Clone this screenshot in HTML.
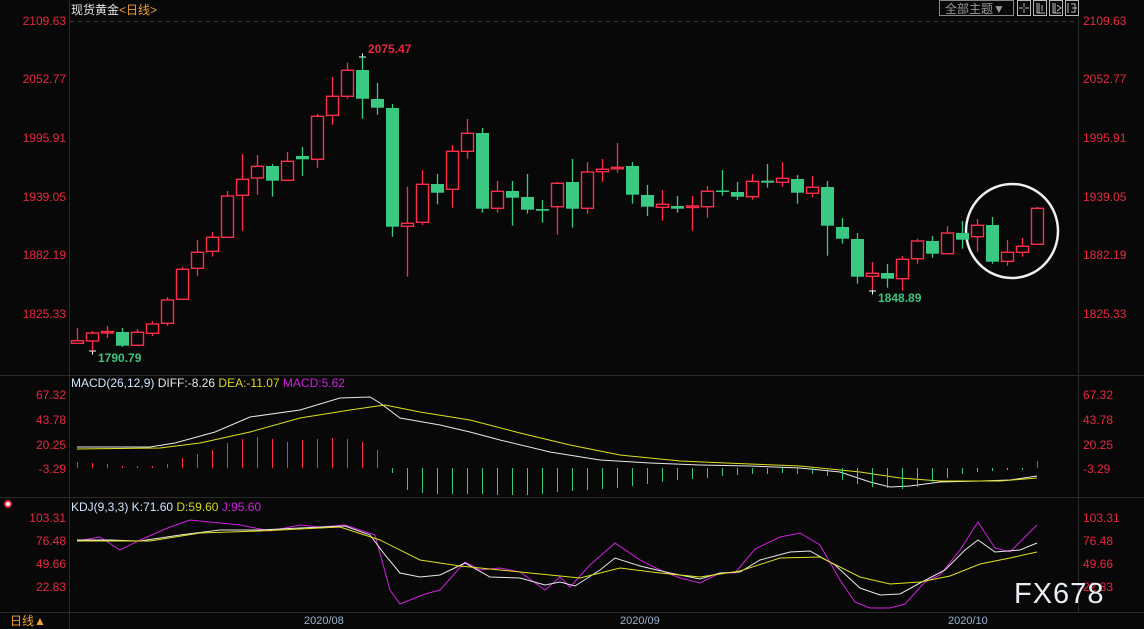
<!DOCTYPE html>
<html><head><meta charset="utf-8"><style>
html,body{margin:0;padding:0;background:#080808;}
svg{display:block}
text{font-family:"Liberation Sans","Noto Sans CJK SC",sans-serif;}
</style></head><body>
<svg width="1144" height="629" xmlns="http://www.w3.org/2000/svg">
<rect width="1144" height="629" fill="#080808"/>
<!-- frame lines -->
<g stroke="#2a2a2a" stroke-width="1">
<line x1="69.5" y1="0" x2="69.5" y2="629"/>
<line x1="1078.5" y1="0" x2="1078.5" y2="612"/>
<line x1="0" y1="375.5" x2="1144" y2="375.5"/>
<line x1="0" y1="497.5" x2="1144" y2="497.5"/>
<line x1="0" y1="612.5" x2="1144" y2="612.5"/>
</g>
<line x1="70" y1="21.5" x2="1078" y2="21.5" stroke="#3a3a3a" stroke-dasharray="4,4"/>
<!-- header -->
<text x="71" y="14" font-size="12" fill="#e6e6e6">现货黄金<tspan fill="#f0a030">&lt;日线&gt;</tspan></text>
<rect x="939.5" y="0.5" width="74" height="15" fill="none" stroke="#888"/>
<text x="945" y="13" font-size="12" fill="#999">全部主题▼</text>
<g fill="none" stroke="#bbb">
<rect x="1017.5" y="0.5" width="13" height="15"/><rect x="1033.5" y="0.5" width="13" height="15"/>
<rect x="1049.5" y="0.5" width="13" height="15"/><rect x="1065.5" y="0.5" width="13" height="15"/>
<path d="M1024 3v4M1024 9v4M1019 8h4M1025 8h4M1037 3v10h8M1039 3v10M1042 5v6M1053 3v10h8M1055 3v10M1057 5l4 3-4 3M1068 3v10M1071 4h4v8h-4M1072 8h5"/>
</g>
<!-- price axes -->
<g font-size="12" fill="#e8283f">
<text x="66" y="25" text-anchor="end">2109.63</text><text x="1083" y="25">2109.63</text>
<text x="66" y="83" text-anchor="end">2052.77</text><text x="1083" y="83">2052.77</text>
<text x="66" y="142" text-anchor="end">1995.91</text><text x="1083" y="142">1995.91</text>
<text x="66" y="201" text-anchor="end">1939.05</text><text x="1083" y="201">1939.05</text>
<text x="66" y="259" text-anchor="end">1882.19</text><text x="1083" y="259">1882.19</text>
<text x="66" y="318" text-anchor="end">1825.33</text><text x="1083" y="318">1825.33</text>
<text x="66" y="399" text-anchor="end">67.32</text><text x="1083" y="399">67.32</text>
<text x="66" y="424" text-anchor="end">43.78</text><text x="1083" y="424">43.78</text>
<text x="66" y="449" text-anchor="end">20.25</text><text x="1083" y="449">20.25</text>
<text x="66" y="473" text-anchor="end">-3.29</text><text x="1083" y="473">-3.29</text>
<text x="66" y="522" text-anchor="end">103.31</text><text x="1083" y="522">103.31</text>
<text x="66" y="545" text-anchor="end">76.48</text><text x="1083" y="545">76.48</text>
<text x="66" y="568" text-anchor="end">49.66</text><text x="1083" y="568">49.66</text>
<text x="66" y="591" text-anchor="end">22.83</text><text x="1083" y="591">22.83</text>
</g>
<!-- candles -->
<g id="c" stroke-width="1.5"></g>
<g stroke-width="1.4">
<script type="text/plain"></script>
</g>
<g stroke-width="1.4" fill="#080808">
<!-- x,wt,wb,bt,bb,color -->
</g>
<g id="candles"></g>
<text x="368" y="53" font-size="12" font-weight="bold" fill="#e8283f">2075.47</text>
<text x="98" y="362" font-size="12" font-weight="bold" fill="#3cc47f">1790.79</text>
<text x="878" y="302" font-size="12" font-weight="bold" fill="#3cc47f">1848.89</text>
<g stroke="#fff" stroke-width="1"><path d="M359 57h7M362.5 53.5v7M89 351h7M92.5 347.5v7M869 291h7M872.5 287.5v7"/></g>
<ellipse cx="1012" cy="231" rx="46" ry="47" fill="none" stroke="#f0f0f0" stroke-width="2.5"/>
<!-- MACD -->
<text x="71" y="387" font-size="12" fill="#cfe6ff">MACD(26,12,9) <tspan fill="#e8e8e8">DIFF:-8.26</tspan>  <tspan fill="#d8d820">DEA:-11.07</tspan>  <tspan fill="#d020e0">MACD:5.62</tspan></text>
<g id="hist" stroke-width="1"></g>
<polyline fill="none" stroke="#e8e8e8" stroke-width="1" points="77,447 150,447 175,443 215,432 250,417 300,410 340,398 370,397 380,403 400,418 440,425 470,432 500,440 550,452 600,460 650,463 700,465 750,466 800,468 840,472 870,482 890,487 910,486 940,482 980,481 1010,480 1037,476"/>
<polyline fill="none" stroke="#e0e020" stroke-width="1" points="77,449 160,448 200,443 250,432 300,418 350,410 385,405 420,412 470,420 520,433 570,445 620,455 680,461 750,464 800,466 860,472 900,478 940,481 1000,481 1037,478"/>
<!-- KDJ -->
<circle cx="8" cy="504" r="3" fill="#fff" stroke="#e8283f" stroke-width="2"/>
<text x="71" y="511" font-size="12" fill="#cfe6ff">KDJ(9,3,3) K:71.60  <tspan fill="#d8d820">D:59.60</tspan>  <tspan fill="#d020e0">J:95.60</tspan></text>
<polyline fill="none" stroke="#d020e0" stroke-width="1" points="77,541 100,537 120,550 140,540 170,527 190,520 210,522 240,525 270,531 300,525 320,527 345,525 375,535 390,590 400,604 410,600 425,594 440,590 465,562 480,570 500,568 520,572 545,590 560,577 570,587 590,565 615,543 640,560 660,570 680,578 700,583 720,573 735,573 755,549 780,537 800,533 820,545 840,580 855,602 870,608 890,608 905,604 925,582 940,575 960,550 978,522 995,548 1010,552 1037,525"/>
<polyline fill="none" stroke="#e8e8e8" stroke-width="1" points="77,540 110,540 140,541 180,535 220,530 260,530 300,528 345,526 370,535 385,555 400,573 420,577 440,575 465,563 490,577 520,578 545,585 560,582 575,586 600,570 615,558 640,566 670,573 700,579 720,573 740,572 760,560 790,552 810,551 835,565 860,588 880,595 900,594 920,583 945,570 965,550 978,540 995,552 1020,550 1037,543"/>
<polyline fill="none" stroke="#e0e020" stroke-width="1" points="77,541 150,541 200,533 260,531 340,527 380,540 420,560 460,566 500,570 540,574 580,578 620,568 660,573 700,577 740,571 780,558 820,557 860,577 890,584 920,582 950,576 980,564 1010,558 1037,552"/>
<text x="1014" y="603" font-size="29" fill="#e8eef4" letter-spacing="1">FX678</text>
<!-- bottom -->
<text x="10" y="625" font-size="12" fill="#f0a030">日线▲</text>
<g font-size="11" fill="#9ab4d0">
<text x="304" y="624">2020/08</text><text x="620" y="624">2020/09</text><text x="948" y="624">2020/10</text>
</g>
<g id="cg"></g>
</svg>
<script>
var R="#ff2d4b",G="#3ac983";
var d=[[77,328,343,340.7,343.3,R],[92,331,351,333,341,R],[107,326,338,331.5,333,R],[122,328,347,332,345.7,G],[137,329,346,332.3,345.3,R],[152,321,336,324,333.3,R],[167,297,325.7,300,323.3,R],[182,267,300,269.3,299.3,R],[197,240,275.7,252.3,268.3,R],[212,232,256.7,237.3,251.3,R],[227,191,237.3,196,237.3,R],[242,154,230.7,179.3,195.3,R],[257,155,194.7,166.3,178,R],[272,164,196.7,166,180.7,G],[287,152,181,161.3,180.3,R],[302,147,176,156,159.3,G],[317,114,167.7,116.3,159.3,R],[332,77,124.7,96.3,115.3,R],[347,62.7,98.7,70.3,96.3,R],[362,56.7,118.7,70,98.7,G],[377,83,114.7,99,107.7,G],[392,104,236.7,108,226.7,G],[407,186.7,276.7,223.3,226.3,R],[422,170,225,184.3,222.3,R],[437,174,204.3,184,192.7,G],[452,145,207.7,151.3,189.3,R],[467,119,158.7,133.3,151.3,R],[482,128,212.7,133,208.7,G],[497,181,212.7,191.3,208.3,R],[512,181,225.7,191,197.7,G],[527,174,213.7,197,209.7,G],[542,200,222.7,209,210.7,G],[557,182,234.7,183.3,206.7,R],[572,159,227.7,182,208.7,G],[587,162,213.7,172,208.3,R],[602,159,181.7,169.3,171.7,R],[617,143,172.7,167.3,168.7,R],[632,162,203.7,166,194.7,G],[647,185,216,195,206.7,G],[662,190,220.7,204.3,207.3,R],[677,196,212.7,206,208.7,G],[692,196,230.7,206,207.5,R],[707,186,217.7,191.3,206.7,R],[722,170,195.7,190.5,192,G],[737,182,200,192,196.7,G],[752,174,199.7,181.3,196.7,R],[767,164,187.7,180.7,182.7,G],[782,162,186.7,178.3,182.3,R],[797,175,203.7,179,192.7,G],[812,176,197,187.3,193.3,R],[827,181,255.7,187,225.7,G],[842,218,243.7,227,238.7,G],[857,233,283.7,239,276.7,G],[872,262,290,273.3,276.3,R],[887,264,287.7,273,278.7,G],[902,256,290.7,259.3,278.7,R],[917,238.7,263.7,241,258.7,R],[932,236,257.7,241,253.7,G],[947,226,253.7,233,253.7,R],[962,221,248.7,233,239.7,G],[977,219,251.7,225.3,236.7,R],[992,217,263.7,225,261.7,G],[1007,240,265.7,252.3,261.3,R],[1022,238,256.7,246.3,252.3,R],[1037,207,244.3,208.3,244.3,R]];
var s="";
d.forEach(function(c){var x=c[0],col=c[5];
s+='<line x1="'+(x+.5)+'" y1="'+c[1]+'" x2="'+(x+.5)+'" y2="'+c[2]+'" stroke="'+col+'" stroke-width="1.3"/>';
var h=Math.max(c[4]-c[3],1.5);
if(col==G)s+='<rect x="'+(x-6)+'" y="'+c[3]+'" width="13" height="'+h+'" fill="'+G+'"/>';
else s+='<rect x="'+(x-5.5)+'" y="'+c[3]+'" width="12" height="'+h+'" fill="#080808" stroke="'+R+'" stroke-width="1.4"/>';});
var hr=[[77,462],[92,463],[107,464],[122,466],[137,466],[152,466],[167,464],[182,458],[197,454],[212,450],[227,443],[242,439],[257,437],[272,439],[287,442],[302,440],[317,439],[332,438],[347,439],[362,442],[377,450],[1037,461]];
hr.forEach(function(b){s+='<line x1="'+(b[0]+.5)+'" y1="'+b[1]+'" x2="'+(b[0]+.5)+'" y2="468" stroke="'+R+'"/>';});
var gb=[473,490,493,494,494,494,494,495,495,495,494,492,491,490,489,488,486,484,482,480,479,478,476,475,474,474,473,474,474,476,480,484,487,488,489,487,482,478,474,472,471,470,470];
gb.forEach(function(y,i){var x=392+15*i;s+='<line x1="'+(x+.5)+'" y1="468" x2="'+(x+.5)+'" y2="'+y+'" stroke="'+G+'"/>';});
document.getElementById("cg").outerHTML='<g>'+s+'</g>';
</script>
</body></html>
